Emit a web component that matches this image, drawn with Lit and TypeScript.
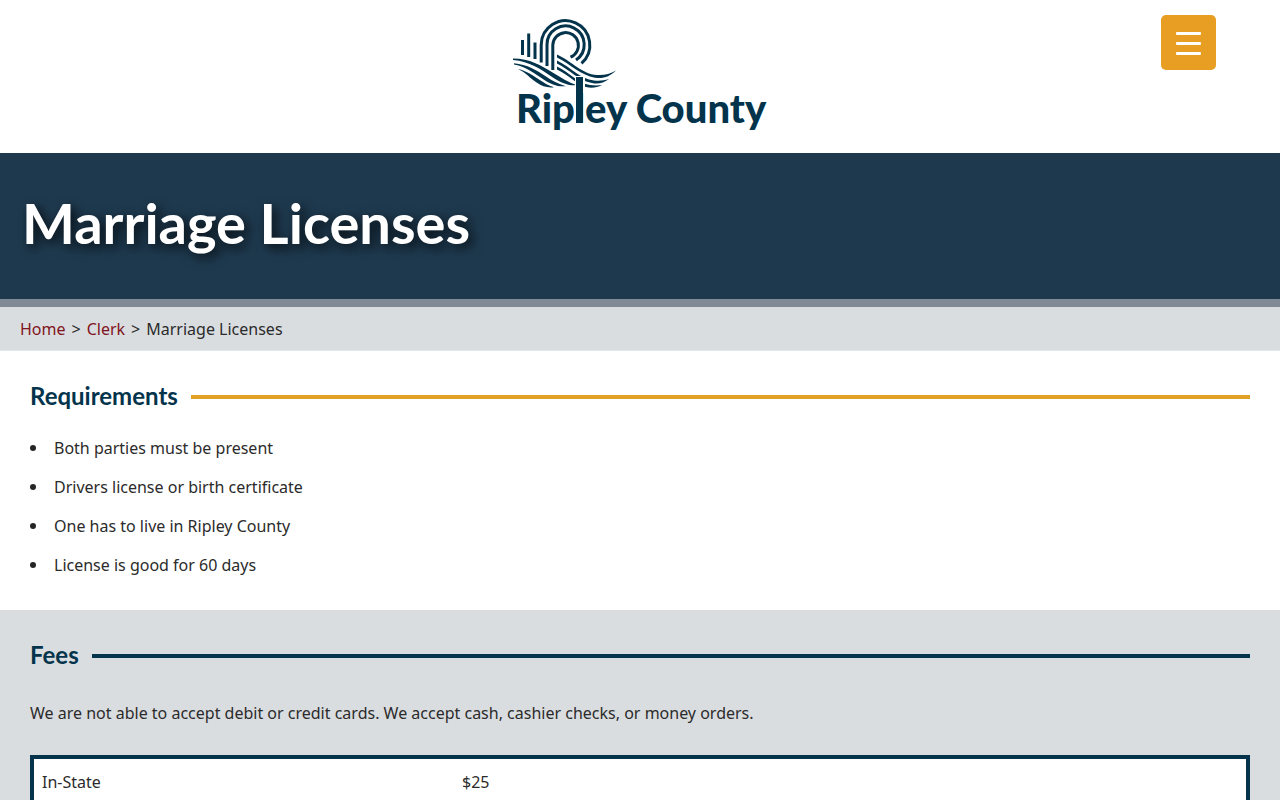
import { LitElement, html, css, svg } from "lit";
import { customElement, property } from "lit/decorators.js";

@customElement("county-logo")
class CountyLogo extends LitElement {
  static styles = css`
    :host { display: block; }
    .logo { display: block; width: 260px; height: auto; }
    .ink { fill: #04344c; }
    .line { fill: none; stroke: #04344c; stroke-width: 3; }
    .name { fill: #04344c; font: 900 40px Lato, sans-serif; }
    .gap { fill: #fff; }
  `;

  render() {
    return html`<svg class="logo" viewBox="510 15 260 121" role="img" aria-label="Ripley County">
      ${svg`
        <path class="line" d="M522.5 40V55M528.7 33.5V57M535 42.5V59" />
        <path class="line" d="M541.2 62.5V45A24.3 24.3 0 1 1 581.5 63.3" />
        <path class="line" d="M547 66V45A18.6 18.6 0 1 1 576 60" />
        <path class="line" d="M552.8 70V45A12.8 12.8 0 1 1 570.5 57.2" />
        <path class="ink" d="M513 58.5C530 58.5 541 65.500 553 72.700C561 77.700 568 82 577 85.200C567 86 560 82 551 76.200C540 69 530 61.500 513 60Z" />
        <path class="ink" d="M514 63.3C527 64.5 537 70.5 546 76.5C552 80.5 558 84 566 86.2C557 87 551 84 544 79.700C534 73.300 527 67 514 64.500Z" />
        <path class="ink" d="M518 69C527 71 533 75.500 539 79.500C544 82.700 548 85.500 554 87.200C547 88 542 86 537 82.700C530 78.300 526 72.700 518 69Z" />
        <path class="ink" d="M557 54.5C573 62 582 74 597 75C604 75.5 610 74 616 70.5C610 76.5 603 79 595 77.700C581 75.500 571 64.500 557 57.5Z" />
        <path class="ink" d="M557 60.5C572 68 580 79 594 80.5C600 81 604 80.5 609 79C603 83.5 598 84.2 592 83C578 80.500 571 70.500 557 63.5Z" />
        <path class="ink" d="M557 66.5C570 73 578 83 590 85C594 85.5 598 85.5 602 85C597 87.5 592 88.5 586 87C576 84 570 76 557 69.5Z" />
        <text class="name" x="516" y="123">Ripley County</text>
        <rect class="gap" x="575" y="76" width="10" height="15" />
        <rect class="ink" x="576" y="77" width="7" height="46" />
      `}
    </svg>`;
  }
}

@customElement("section-heading")
class SectionHeading extends LitElement {
  @property() tone = "gold";
  static styles = css`
    :host { display: block; }
    .heading {
      display: flex; align-items: center; gap: 13px; margin: 0;
      font: 700 24px/32px Lato, sans-serif; color: #04344c;
    }
    .rule { flex: 1; height: 4px; margin-top: 2px; background: #04344c; }
    .gold { background: #e0a126; }
  `;
  render() {
    return html`<h2 class="heading"><slot></slot><span class="rule ${this.tone}"></span></h2>`;
  }
}

@customElement("app-root")
class AppRoot extends LitElement {
  static styles = css`
    :host {
      display: block;
      background: #fff;
      color: #2b2b2b;
      font: 16px/24px "Noto Sans", "Open Sans", sans-serif;
    }
    .header {
      display: grid; grid-template-columns: 1fr auto 1fr; align-items: start;
      padding: 15px 64px 17px;
    }
    .brand { grid-column: 2; display: block; }
    .menu {
      justify-self: end; display: grid; align-content: center; justify-items: center; gap: 7px;
      width: 55px; height: 55px; padding: 2px 0 0; border: 0; border-radius: 5px;
      background: #e79e22; cursor: pointer;
    }
    .bar { width: 25px; height: 3px; border-radius: 1px; background: #fff; }
    .banner { background: #1e394e; border-bottom: 8px solid #808b96; padding: 34px 22px 40px; }
    .title {
      margin: 0; font: 700 56px/72px Lato, sans-serif; color: #fff;
      text-shadow: 4px 4px 12px #000c;
    }
    .crumbs {
      display: flex; gap: 6px; padding: 10px 20px 9px;
      background: #dadde0; border-bottom: 1px solid #e3e6e8;
    }
    .link { color: #7f1420; text-decoration: none; }
    .section { padding: 29px 30px 33px; }
    .shaded { background: #dadde0; }
    .list { margin: 24px 0 0; padding: 0; display: grid; gap: 15px; list-style: none; }
    .item { display: flex; align-items: center; gap: 18px; }
    .item::before { content: ""; width: 6px; height: 6px; border-radius: 50%; background: #252525; }
    .note { margin: 30px 0; }
    .fees {
      width: 100%; border: 4px solid #04344c; border-collapse: separate; border-spacing: 0;
      background: #fff; table-layout: fixed;
    }
    .cell { padding: 11px 8px; text-align: left; font-weight: 400; }
    .kind { width: 404px; }
  `;

  requirements = [
    "Both parties must be present",
    "Drivers license or birth certificate",
    "One has to live in Ripley County",
    "License is good for 60 days",
  ];

  render() {
    return html`
      <header class="header">
        <a class="brand" href="#" aria-label="Ripley County"><county-logo></county-logo></a>
        <button class="menu" aria-label="Menu">
          <span class="bar"></span><span class="bar"></span><span class="bar"></span>
        </button>
      </header>
      <div class="banner"><h1 class="title">Marriage Licenses</h1></div>
      <nav class="crumbs" aria-label="Breadcrumb">
        <a class="link" href="#">Home</a><span>&gt;</span><a class="link" href="#">Clerk</a><span>&gt;</span><span>Marriage Licenses</span>
      </nav>
      <main>
        <section class="section">
          <section-heading tone="gold">Requirements</section-heading>
          <ul class="list">${this.requirements.map((r) => html`<li class="item">${r}</li>`)}</ul>
        </section>
        <section class="section shaded">
          <section-heading tone="navy">Fees</section-heading>
          <p class="note">We are not able to accept debit or credit cards. We accept cash, cashier checks, or money orders.</p>
          <table class="fees">
            <tr><th class="cell kind" scope="row">In-State</th><td class="cell">$25</td></tr>
          </table>
        </section>
      </main>
    `;
  }
}
